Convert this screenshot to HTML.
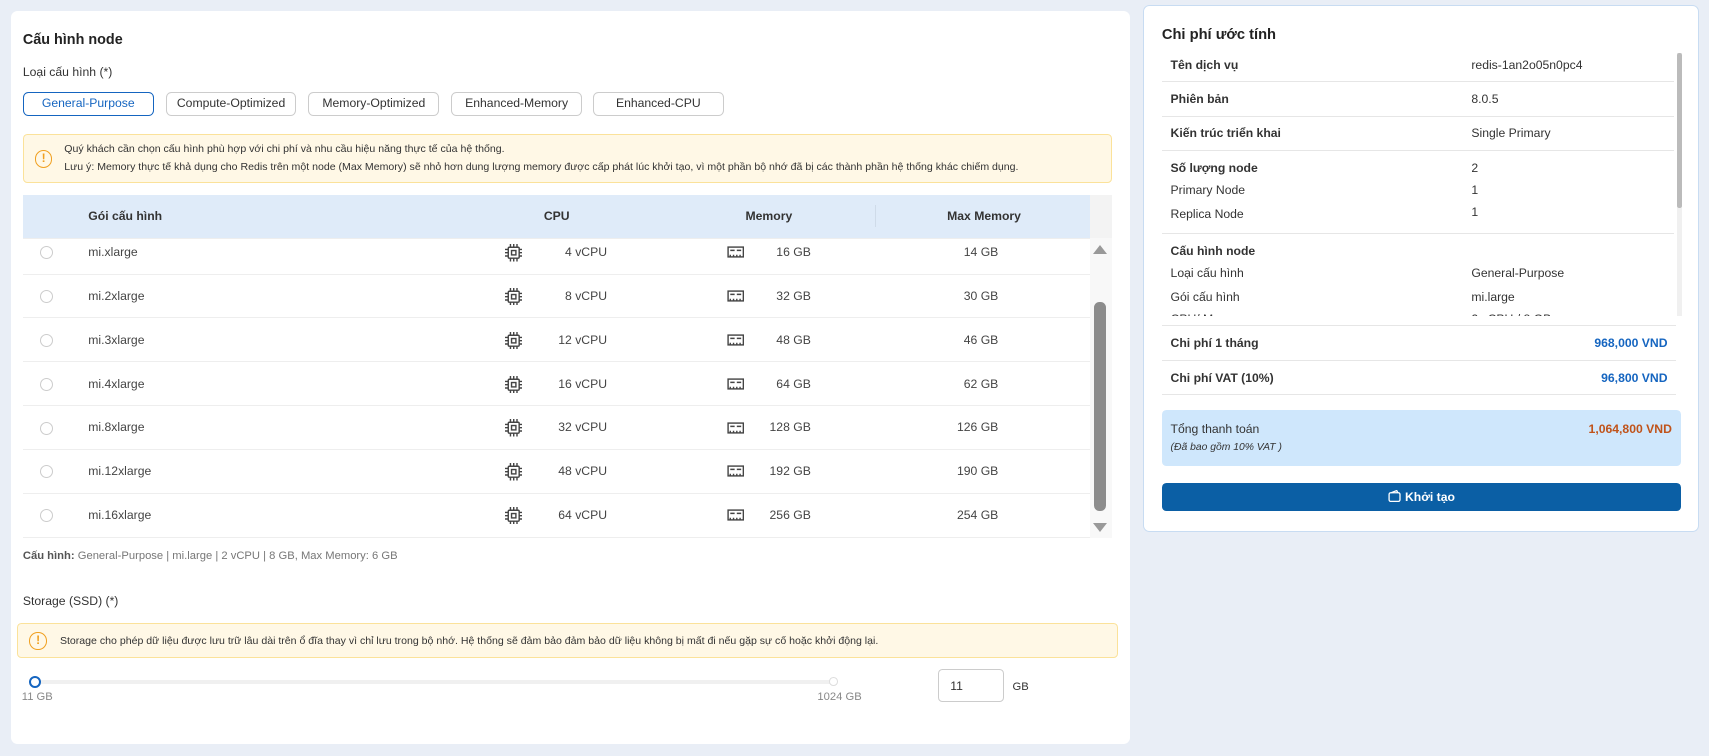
<!DOCTYPE html>
<html><head><meta charset="utf-8"><style>
*{box-sizing:border-box;margin:0;padding:0}
html,body{width:1709px;height:756px;overflow:hidden;background:#e9eef6}
#w{zoom:1.0899;width:1568px;height:694px;font-family:"Liberation Sans",sans-serif;font-size:11.2px;color:#333;position:relative;overflow:hidden}
.abs{position:absolute}
.card{position:absolute;background:#fff;border-radius:6px}
.btn{position:absolute;top:84px;height:22px;border:1px solid #ccc;border-radius:5px;font-size:11.2px;color:#333;text-align:center;line-height:20px}
.warn{position:absolute;background:#fff8e6;border:1px solid #fbe29a;border-radius:4px}
.wi{position:absolute;width:16px;height:16px;border:1.5px solid #f0a020;border-radius:50%;color:#f0a020;font-size:11px;font-weight:bold;text-align:center;line-height:13px}
.row{position:absolute;left:21px;width:979px;height:40px;border-bottom:1px solid #eee}
.row span{position:absolute;top:13px;font-size:11.2px;color:#444}
.radio{position:absolute;left:16px;top:14px;width:12px;height:12px;border:1px solid #ccc;border-radius:50%}
.r{text-align:right}
.rl{position:absolute;left:1066px;width:472px;border-bottom:1px solid #e6e6e6}
.rl b,.rl i{position:absolute;font-style:normal;font-size:11.2px}
</style></head><body><div id="w">
<div class="card" style="left:10px;top:10px;width:1027px;height:673px"></div>
<div class="abs" style="left:21px;top:29px;font-size:13.2px;font-weight:bold;color:#222">Cấu hình node</div>
<div class="abs" style="left:21px;top:60px;color:#333">Loại cấu hình (*)</div>
<div class="btn" style="left:21px;width:120px;border-color:#1565c0;color:#1565c0">General-Purpose</div>
<div class="btn" style="left:152px;width:120px">Compute-Optimized</div>
<div class="btn" style="left:283px;width:120px">Memory-Optimized</div>
<div class="btn" style="left:414px;width:120px">Enhanced-Memory</div>
<div class="btn" style="left:544px;width:120px">Enhanced-CPU</div>
<div class="warn" style="left:21px;top:123px;width:999px;height:45px"></div>
<div class="wi" style="left:32px;top:138px">!</div>
<div class="abs" style="left:59px;top:131px;font-size:9.7px;color:#333">Quý khách cần chọn cấu hình phù hợp với chi phí và nhu cầu hiệu năng thực tế của hệ thống.</div>
<div class="abs" style="left:59px;top:148px;font-size:9.7px;color:#333">Lưu ý: Memory thực tế khả dụng cho Redis trên một node (Max Memory) sẽ nhỏ hơn dung lượng memory được cấp phát lúc khởi tạo, vì một phần bộ nhớ đã bị các thành phần hệ thống khác chiếm dụng.</div>
<div class="abs" style="left:21px;top:179px;width:979px;height:39px;background:#dfebf9"></div>
<div class="abs" style="left:1000px;top:179px;width:20px;height:39px;background:#f3f3f3"></div>
<div class="abs" style="left:803px;top:188px;width:1px;height:20px;background:#cfdbe9"></div>
<div class="abs" style="left:81px;top:192px;font-weight:bold;color:#333">Gói cấu hình</div>
<div class="abs" style="left:499px;top:192px;font-weight:bold;color:#333">CPU</div>
<div class="abs" style="left:684px;top:192px;font-weight:bold;color:#333">Memory</div>
<div class="abs" style="left:869px;top:192px;font-weight:bold;color:#333">Max Memory</div>
<div class="abs" style="left:1000px;top:218px;width:20px;height:276px;background:#f8f8f8"></div>
<div class="abs" style="left:1003px;top:225px;width:0;height:0;border-left:7px solid transparent;border-right:7px solid transparent;border-bottom:9px solid #999"></div>
<div class="abs" style="left:1003px;top:480px;width:0;height:0;border-left:7px solid transparent;border-right:7px solid transparent;border-top:9px solid #999"></div>
<div class="abs" style="left:1004px;top:277px;width:11px;height:192px;background:#8c8c8c;border-radius:5px"></div>
<div id="rows"></div>
<script>
var d=[["mi.xlarge","4","16","14"],["mi.2xlarge","8","32","30"],["mi.3xlarge","12","48","46"],["mi.4xlarge","16","64","62"],["mi.8xlarge","32","128","126"],["mi.12xlarge","48","192","190"],["mi.16xlarge","64","256","254"]];
var cpu='<svg width="16" height="16" viewBox="0 0 16 16" style="position:absolute;left:442px;top:12px" fill="none" stroke="#444" stroke-width="1.3"><rect x="3" y="3" width="10" height="10" rx="1"/><rect x="6" y="6" width="4" height="4"/><path d="M5 0v3M8 0v3M11 0v3M5 13v3M8 13v3M11 13v3M0 5h3M0 8h3M0 11h3M13 5h3M13 8h3M13 11h3"/></svg>';
var mem='<svg width="16" height="12" viewBox="0 0 16 12" style="position:absolute;left:646px;top:14px" fill="none" stroke="#444" stroke-width="1.3"><rect x="1" y="1" width="14" height="9"/><path d="M3 4h4M9 4h4M3 8v2M6 8v2M9 8v2M12 8v2"/></svg>';
var h='';d.forEach(function(r,i){h+='<div class="row" style="top:'+(212+i*40.2)+'px"><div class="radio"></div><span style="left:60px">'+r[0]+'</span>'+cpu+'<span class="r" style="left:460px;width:76px">'+r[1]+' vCPU</span>'+mem+'<span class="r" style="left:660px;width:63px">'+r[2]+' GB</span><span class="r" style="left:800px;width:95px">'+r[3]+' GB</span></div>'});
document.getElementById('rows').innerHTML=h;
</script>
<div class="abs" style="left:21px;top:218px;width:979px;height:1px;background:#eee"></div>
<div class="abs" style="left:21px;top:505px;font-size:10.3px;color:#777"><b style="color:#555">Cấu hình:</b> General-Purpose | mi.large | 2 vCPU | 8 GB, Max Memory: 6 GB</div>
<div class="abs" style="left:21px;top:545px;color:#333">Storage (SSD) (*)</div>
<div class="warn" style="left:16px;top:572px;width:1010px;height:32px"></div>
<div class="wi" style="left:27px;top:580px">!</div>
<div class="abs" style="left:55px;top:583px;font-size:9.7px;color:#333">Storage cho phép dữ liệu được lưu trữ lâu dài trên ổ đĩa thay vì chỉ lưu trong bộ nhớ. Hệ thống sẽ đảm bảo đảm bảo dữ liệu không bị mất đi nếu gặp sự cố hoặc khởi động lại.</div>
<div class="abs" style="left:30px;top:624px;width:736px;height:4px;background:#f0f0f0;border-radius:2px"></div>
<div class="abs" style="left:27px;top:620px;width:11px;height:11px;border:2px solid #1565c0;border-radius:50%;background:#fff"></div>
<div class="abs" style="left:761px;top:621px;width:8px;height:8px;border:1px solid #ddd;border-radius:50%;background:#fff"></div>
<div class="abs" style="left:20px;top:634px;font-size:10.3px;color:#888">11 GB</div>
<div class="abs" style="left:750px;top:634px;font-size:10.3px;color:#888">1024 GB</div>
<div class="abs" style="left:861px;top:614px;width:60px;height:30px;border:1px solid #ccc;border-radius:4px;padding:8px 0 0 10px">11</div>
<div class="abs" style="left:929px;top:625px;font-size:10.3px">GB</div>

<div class="card" style="left:1049px;top:5px;width:510px;height:483px;border:1px solid #c8dcf2"></div>
<div class="abs" style="left:1066px;top:25px;font-size:13.5px;font-weight:bold;color:#222">Chi phí ước tính</div>
<div class="abs" style="left:1539px;top:49px;width:4px;height:241px;background:#f0f0f0"></div>
<div class="abs" style="left:1539px;top:49px;width:4px;height:142px;background:#bbb;border-radius:2px"></div>
<div class="rl" style="top:45px;height:30px;width:470px"><b style="left:8px;top:8px">Tên dịch vụ</b><i style="left:284px;top:8px">redis-1an2o05n0pc4</i></div>
<div class="rl" style="top:75px;height:32px;width:470px"><b style="left:8px;top:9px">Phiên bản</b><i style="left:284px;top:9px">8.0.5</i></div>
<div class="rl" style="top:107px;height:32px;width:470px"><b style="left:8px;top:9px">Kiến trúc triển khai</b><i style="left:284px;top:9px">Single Primary</i></div>
<div class="rl" style="top:139px;height:76px;width:470px"><b style="left:8px;top:9px">Số lượng node</b><i style="left:284px;top:9px">2</i><i style="left:8px;top:29px">Primary Node</i><i style="left:284px;top:29px">1</i><i style="left:8px;top:51px">Replica Node</i><i style="left:284px;top:49px">1</i></div>
<div class="abs" style="left:1066px;top:215px;width:470px;height:75px;overflow:hidden"><b style="position:absolute;left:8px;top:9px">Cấu hình node</b><span style="position:absolute;left:8px;top:29px">Loại cấu hình</span><span style="position:absolute;left:284px;top:29px">General-Purpose</span><span style="position:absolute;left:8px;top:51px">Gói cấu hình</span><span style="position:absolute;left:284px;top:51px">mi.large</span><span style="position:absolute;left:8px;top:71px">CPU/ Memory</span><span style="position:absolute;left:284px;top:71px">2 vCPU / 8 GB</span></div>
<div class="rl" style="top:298px;height:33px;border-top:1px solid #e6e6e6"><b style="left:8px;top:9px">Chi phí 1 tháng</b><b style="right:8px;top:9px;color:#1565c0">968,000 VND</b></div>
<div class="rl" style="top:331px;height:31px"><b style="left:8px;top:9px">Chi phí VAT (10%)</b><b style="right:8px;top:9px;color:#1565c0">96,800 VND</b></div>
<div class="abs" style="left:1066px;top:376px;width:476px;height:52px;background:#cfe7fc;border-radius:4px"><span style="position:absolute;left:8px;top:11px">Tổng thanh toán</span><b style="position:absolute;right:8px;top:11px;color:#c0531a">1,064,800 VND</b><i style="position:absolute;left:8px;top:30px;font-size:9.5px">(Đã bao gồm 10% VAT )</i></div>
<div class="abs" style="left:1066px;top:443px;width:476px;height:26px;background:#0b5fa5;border-radius:4px;color:#fff;font-weight:bold;text-align:center;line-height:26px">
<svg width="12" height="11" viewBox="0 0 12 11" style="vertical-align:-1px;margin-right:4px" fill="none" stroke="#fff" stroke-width="1.2"><rect x="1" y="2.5" width="10" height="8" rx="1.5"/><path d="M3 2.5l5-2 1 2"/></svg>Khởi tạo</div>
</div></body></html>
